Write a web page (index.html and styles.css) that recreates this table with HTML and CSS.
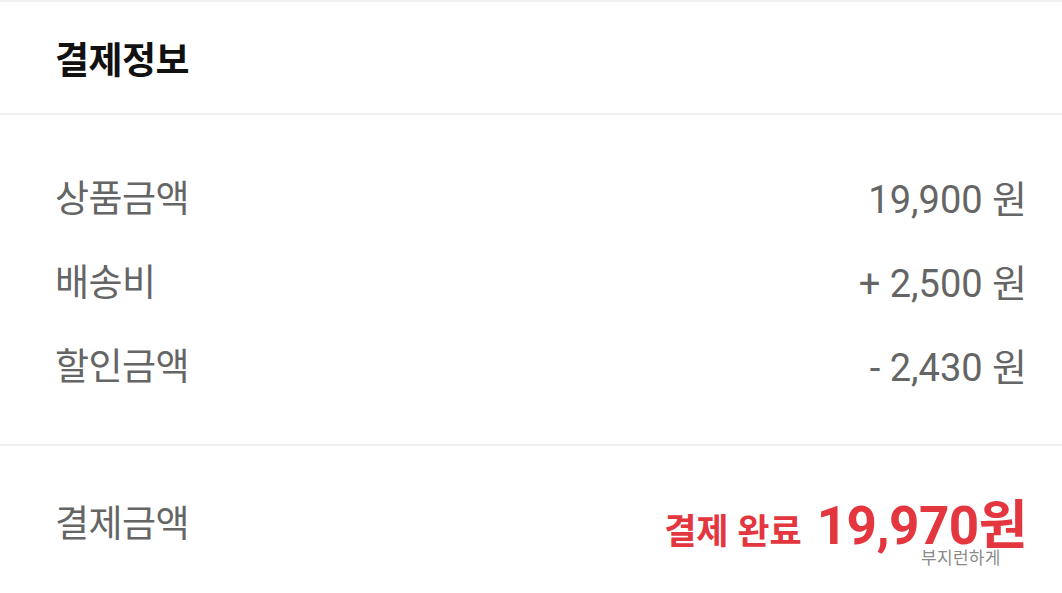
FILE: index.html
```html
<!DOCTYPE html>
<html lang="ko">
<head>
  <meta charset="UTF-8" />
  <meta name="viewport" content="width=device-width, initial-scale=1" />
  <title>결제정보</title>
  <link rel="stylesheet" href="styles.css">
</head>
<body>

  <!-- 결제정보 카드 -->
  <section class="payment">
    <header class="payment-head">
      <h2>결제정보</h2>
    </header>

    <div class="payment-list">
      <div class="row">
        <span class="label">상품금액</span>
        <span class="value">19,900 원</span>
      </div>
      <div class="row">
        <span class="label">배송비</span>
        <span class="value">+ 2,500 원</span>
      </div>
      <div class="row">
        <span class="label">할인금액</span>
        <span class="value">- 2,430 원</span>
      </div>
    </div>

    <div class="payment-total">
      <span class="label">결제금액</span>
      <span class="total">
        <span class="status">결제 완료</span>
        <span class="amount">19,970원</span>
      </span>
      <span class="watermark">부지런하게</span>
    </div>
  </section>

</body>
</html>
```

FILE: styles.css
```css
:root {
  --line: #f0f0f0;
  --label: #656565;
  --red: #e3363f;
}
* {
  box-sizing: border-box;
}
body {
  margin: 0;
  background: #fff;
  font-family: Roboto, "Noto Sans CJK KR", sans-serif;
  overflow: hidden;
}

/* 카드 */
.payment {
  border-top: 2px solid var(--line);
}
.payment-head {
  height: 113px;
  display: flex;
  align-items: center;
  padding: 0 55px;
  border-bottom: 2px solid var(--line);
}
.payment-head h2 {
  margin: 0;
  font-size: 37px;
  font-weight: 700;
  color: #111;
  letter-spacing: -0.5px;
}

/* 금액 목록 */
.payment-list {
  padding: 39px 35px 38px 55px;
  border-bottom: 2px solid var(--line);
}
.row {
  height: 84px;
  display: flex;
  align-items: center;
  justify-content: space-between;
}
.label {
  font-size: 37px;
  color: var(--label);
  letter-spacing: -0.5px;
}
.value {
  font-size: 38px;
  color: var(--label);
}

/* 결제금액 */
.payment-total {
  position: relative;
  height: 145px;
  display: flex;
  align-items: flex-start;
  justify-content: space-between;
  padding: 59px 35px 0 55px;
}
.payment-total .label {
  line-height: 40px;
}
.total {
  display: flex;
  align-items: baseline;
  gap: 15px;
  color: var(--red);
  font-weight: 700;
  line-height: 1;
  margin-top: -5px;
}
.status {
  font-size: 35px;
}
.amount {
  font-size: 53px;
  letter-spacing: -0.5px;
}
.watermark {
  position: absolute;
  left: 921px;
  top: 103px;
  font-size: 17px;
  line-height: 1.1;
  color: #8a8a8a;
  letter-spacing: 0.3px;
}
```
